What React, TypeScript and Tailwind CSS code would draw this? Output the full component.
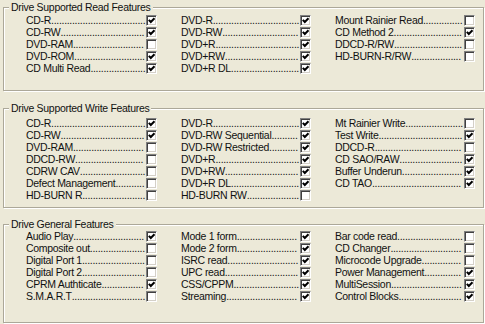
/**
 * DriveFeatures - read / write / general capability panels
 */

type Feature = [string, boolean];

interface Group {
  title: string;
  pad: string;
  height: string;
  columns: Feature[][];
}

const groups: Group[] = [
  {
    title: 'Drive Supported Read Features',
    pad: 'pt-[6px]',
    height: 'h-[84px]',
    columns: [
      [['CD-R', true], ['CD-RW', true], ['DVD-RAM', false], ['DVD-ROM', true], ['CD Multi Read', true]],
      [['DVD-R', true], ['DVD-RW', true], ['DVD+R', true], ['DVD+RW', true], ['DVD+R DL', true]],
      [['Mount Rainier Read', false], ['CD Method 2', true], ['DDCD-R/RW', false], ['HD-BURN-R/RW', false]],
    ],
  },
  {
    title: 'Drive Supported Write Features',
    pad: 'pt-[8px]',
    height: 'h-[100px]',
    columns: [
      [['CD-R', true], ['CD-RW', true], ['DVD-RAM', false], ['DDCD-RW', false], ['CDRW CAV', false], ['Defect Management', false], ['HD-BURN R', false]],
      [['DVD-R', true], ['DVD-RW Sequential', true], ['DVD-RW Restricted', true], ['DVD+R', true], ['DVD+RW', true], ['DVD+R DL', true], ['HD-BURN RW', false]],
      [['Mt Rainier Write', false], ['Test Write', true], ['DDCD-R', false], ['CD SAO/RAW', true], ['Buffer Underun', true], ['CD TAO', true]],
    ],
  },
  {
    title: 'Drive General Features',
    pad: 'pt-[5px]',
    height: 'h-[99px]',
    columns: [
      [['Audio Play', true], ['Composite out', false], ['Digital Port 1', false], ['Digital Port 2', false], ['CPRM Authticate', true], ['S.M.A.R.T', false]],
      [['Mode 1 form', true], ['Mode 2 form', true], ['ISRC read', true], ['UPC read', true], ['CSS/CPPM', true], ['Streaming', true]],
      [['Bar code read', false], ['CD Changer', false], ['Microcode Upgrade', false], ['Power Management', true], ['MultiSession', true], ['Control Blocks', true]],
    ],
  },
];

// text room left of the checkbox in each column
const TEXT_WIDTHS = [120, 119, 129];
const TRACKING = -0.3;

let ctx: CanvasRenderingContext2D | null = null;

function measure(text: string) {
  if (!ctx) {
    ctx = document.createElement('canvas').getContext('2d');
  }
  if (!ctx) return text.length * 5.5;
  ctx.font = "10.5px 'Liberation Sans'";
  return ctx.measureText(text).width + TRACKING * text.length;
}

// as many leader dots as fit between label and checkbox
function leader(label: string, width: number) {
  const dot = measure('.');
  const count = Math.max(0, Math.floor((width - measure(label) - 0.6) / dot));
  return '.'.repeat(count);
}

function CheckBox({ checked }: { checked: boolean }) {
  return (
    <div className="w-[11px] h-[11px] shrink-0 bg-white border-t border-l border-[#808080] border-r-white border-b-white border-r border-b shadow-[inset_1px_1px_0_#404040,inset_-1px_-1px_0_#d4d0c8]">
      {checked && (
        <svg className="w-[9px] h-[9px]" viewBox="0 0 9 9">
          <path d="M1.8 3.8 L3.8 6 L7.5 2.2" fill="none" stroke="#000" strokeWidth="2" />
        </svg>
      )}
    </div>
  );
}

function FeatureRow({ label, checked, width }: { label: string; checked: boolean; width: number }) {
  return (
    <div className="flex items-center h-[12px]">
      <span className="whitespace-nowrap">{label}</span>
      <span className="whitespace-nowrap">{leader(label, width)}</span>
      <div className="ml-auto">
        <CheckBox checked={checked} />
      </div>
    </div>
  );
}

function GroupBox({ group }: { group: Group }) {
  return (
    <div
      className={`relative ${group.height} border border-[#aca899] shadow-[inset_1px_1px_0_#fff,1px_1px_0_#fff] ${group.pad} pl-[22px]`}
    >
      <span className="absolute -top-[7px] left-[5px] px-[2px] bg-[#ece9d8] leading-[13px]">
        {group.title}
      </span>
      <div className="grid grid-cols-[131px_130px_140px] gap-x-[24px]">
        {group.columns.map((col, i) => (
          <div key={i} className="flex flex-col">
            {col.map(([label, checked]) => (
              <FeatureRow key={label} label={label} checked={checked} width={TEXT_WIDTHS[i]} />
            ))}
          </div>
        ))}
      </div>
    </div>
  );
}

export default function App() {
  return (
    <div className="w-[485px] h-[324px] bg-[#ece9d8] text-[#111] text-[10.5px] tracking-[-0.3px] leading-[12px] font-['Liberation_Sans',Arial,sans-serif] pl-[3px] pr-[1px] pt-[7px] flex flex-col">
      <GroupBox group={groups[0]} />
      <div className="h-[17px]" />
      <GroupBox group={groups[1]} />
      <div className="h-[16px]" />
      <GroupBox group={groups[2]} />
    </div>
  );
}
